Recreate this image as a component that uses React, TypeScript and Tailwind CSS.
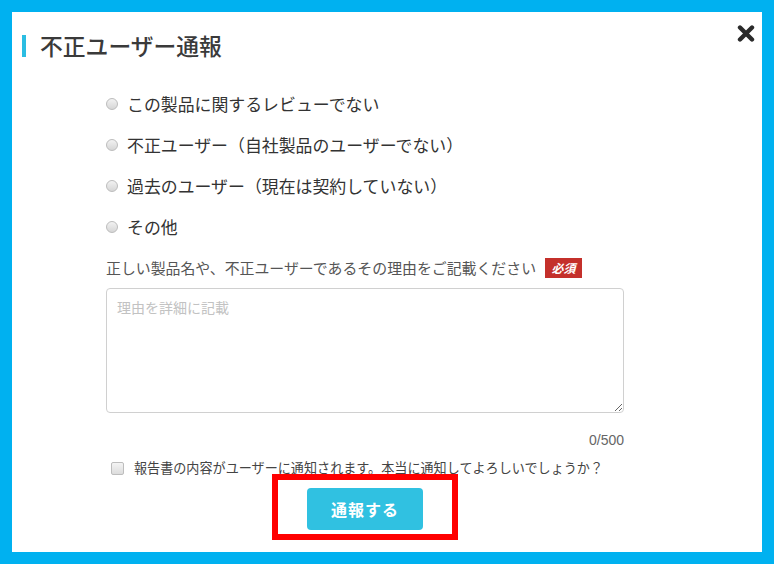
const reasons = [
  "この製品に関するレビューでない",
  "不正ユーザー（自社製品のユーザーでない）",
  "過去のユーザー（現在は契約していない）",
  "その他",
];

const ReportModal = () => {
  return (
    <div className="relative h-full bg-white font-['Noto_Sans_CJK_JP','Noto_Sans',sans-serif] text-[#333]">
      {/* close */}
      <svg
        className="absolute right-[7px] top-[13px]"
        width="18"
        height="17"
        viewBox="0 0 18 17"
      >
        <path d="M3 2.5 L15 14.5 M15 2.5 L3 14.5" stroke="#2b2b2b" strokeWidth="4.4" strokeLinecap="round" />
      </svg>

      <div className="flex items-center pl-[10px] pt-[23px]">
        <span className="h-[22px] w-[4px] bg-[#2bbde2]" />
        <h2 className="ml-[14px] text-[22.8px] leading-[22px] font-medium text-[#3a3a3a]">不正ユーザー通報</h2>
      </div>

      <div className="ml-[94px] w-[518px]">
        <ul className="mt-[26px]">
          {reasons.map((r) => (
            <li key={r} className="flex h-[41px] items-center">
              <span className="h-[12px] w-[12px] rounded-full border border-[#bcbcbc] bg-gradient-to-b from-[#f2f2f2] to-[#d6d6d6]" />
              <span className="ml-[9px] text-[16.9px] leading-[20px]">{r}</span>
            </li>
          ))}
        </ul>

        <div className="mt-[11px] flex h-[20px] items-center">
          <span className="text-[14.9px] leading-[20px] text-[#555]">
            正しい製品名や、不正ユーザーであるその理由をご記載ください
          </span>
          <span className="ml-[9px] flex h-[20px] w-[37px] items-center justify-center bg-[#c4302b] text-[12px] font-bold italic leading-none text-white">
            必須
          </span>
        </div>

        <textarea
          className="mt-[10px] block h-[125px] w-[518px] rounded-[4px] border border-[#d0d0d0] px-[10px] py-[8px] text-[14px] leading-[20px] outline-none placeholder:text-[#c2c2c2]"
          placeholder="理由を詳細に記載"
        />

        <div className="mt-[17px] text-right font-['Liberation_Sans',sans-serif] text-[14px] leading-[20px] text-[#666]">
          0/500
        </div>

        <label className="mt-[8px] flex h-[20px] items-center pl-[5px]">
          <span className="h-[13px] w-[13px] rounded-[2px] border border-[#bdbdbd] bg-gradient-to-b from-[#f4f4f4] to-[#dcdcdc]" />
          <span className="ml-[10px] text-[13.1px] leading-[20px] text-[#444]">
            報告書の内容がユーザーに通知されます。本当に通知してよろしいでしょうか？
          </span>
        </label>

        <div className="mt-[10px] flex justify-center">
          <button className="h-[42px] w-[116px] rounded-[4px] bg-[#30c1e1] text-[16px] font-bold tracking-[1px] text-white">
            通報する
          </button>
        </div>
      </div>

      {/* annotation */}
      <div className="absolute left-[260px] top-[462px] h-[66px] w-[186px] border-[6px] border-[#ff0000]" />
    </div>
  );
};

export default function App() {
  return (
    <div className="h-[564px] w-[774px] bg-[#00b1f0] p-[12px]">
      <ReportModal />
    </div>
  );
}
